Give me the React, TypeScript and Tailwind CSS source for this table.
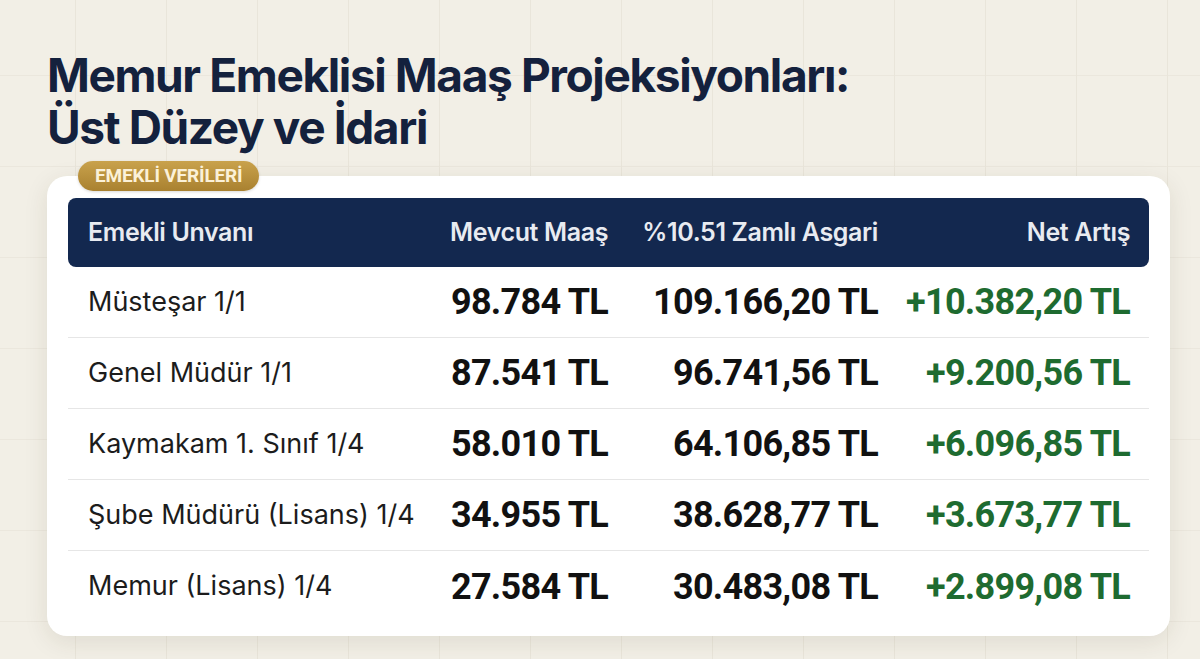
const rows = [
  { name: 'Müsteşar 1/1', current: '98.784 TL', raised: '109.166,20 TL', diff: '+10.382,20 TL' },
  { name: 'Genel Müdür 1/1', current: '87.541 TL', raised: '96.741,56 TL', diff: '+9.200,56 TL' },
  { name: 'Kaymakam 1. Sınıf 1/4', current: '58.010 TL', raised: '64.106,85 TL', diff: '+6.096,85 TL' },
  { name: 'Şube Müdürü (Lisans) 1/4', current: '34.955 TL', raised: '38.628,77 TL', diff: '+3.673,77 TL' },
  { name: 'Memur (Lisans) 1/4', current: '27.584 TL', raised: '30.483,08 TL', diff: '+2.899,08 TL' },
];

const cols = 'grid grid-cols-[340px_180px_270px_252px] items-center';

const App = () => {
  return (
    <div className="w-[1200px] h-[659px] overflow-hidden bg-[#f2efe6] bg-[linear-gradient(to_right,#e9e5da_1px,transparent_1px),linear-gradient(to_bottom,#ebe7dd_1px,transparent_1px)] bg-[size:91px_91px] bg-[position:75px_75px] font-['Inter',sans-serif]">
      <div className="pl-[47px] pt-[49px]">
        {/* Title */}
        <h1 className="text-[46px] leading-[52px] font-bold tracking-[-0.03em] text-[#14213d]">
          Memur Emeklisi Maaş Projeksiyonları:
          <br />
          Üst Düzey ve İdari
        </h1>

        {/* Card */}
        <div className="relative mt-[23px] w-[1123px] bg-white rounded-[20px] shadow-[0_6px_24px_rgba(60,50,20,0.10)] px-[21px] pt-[22px] pb-[14px]">
          <div className="absolute -top-[15px] left-[31px] h-[30px] px-[17px] rounded-full bg-[linear-gradient(to_bottom,#c9a24c,#a98130)] flex items-center shadow-[0_1px_3px_rgba(0,0,0,0.15)]">
            <span className="font-['Roboto',sans-serif] font-bold text-[19px] text-[#fbf1d8] tracking-[-0.01em]">EMEKLİ VERİLERİ</span>
          </div>

          {/* Header */}
          <div className={`${cols} h-[69px] rounded-[8px] bg-[#13284f] px-[20px] text-[25px] font-semibold text-[#e8ebf1] tracking-[-0.015em]`}>
            <div>Emekli Unvanı</div>
            <div className="text-right">Mevcut Maaş</div>
            <div className="text-right">%10.51 Zamlı Asgari</div>
            <div className="text-right">Net Artış</div>
          </div>

          {/* Rows */}
          {rows.map((r, i) => (
            <div
              key={i}
              className={`${cols} h-[71px] px-[20px] ${i < rows.length - 1 ? 'border-b border-[#e6e6e6]' : ''}`}
            >
              <div className="text-[27px] text-[#1c1c1c]">{r.name}</div>
              <div className="text-right font-['Roboto',sans-serif] font-bold text-[36px] text-[#111111] tracking-[-0.02em]">{r.current}</div>
              <div className="text-right font-['Roboto',sans-serif] font-bold text-[36px] text-[#111111] tracking-[-0.02em]">{r.raised}</div>
              <div className="text-right font-['Roboto',sans-serif] font-bold text-[36px] text-[#1e6b30] tracking-[-0.02em]">{r.diff}</div>
            </div>
          ))}
        </div>
      </div>
    </div>
  );
};

export default App;
